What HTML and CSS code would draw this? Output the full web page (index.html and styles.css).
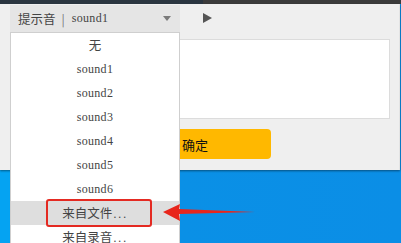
FILE: index.html
```html
<!DOCTYPE html>
<html lang="zh-CN">
<head>
	<meta charset="UTF-8">
	<title>提示音</title>
	<link rel="stylesheet" href="styles.css">
</head>
<body>
<div class="screen">
	<div class="topbar"><span class="topbar-left"></span></div>
	<div class="panel">
		<div class="toolbar">
			<div class="select-head">
				<span class="label">提示音</span>
				<span class="sep">|</span>
				<span class="value">sound1</span>
				<span class="caret"></span>
			</div>
			<span class="play"></span>
		</div>
		<div class="textbox"></div>
		<div class="actions">
			<button class="ok">确定</button>
		</div>
	</div>
	<!-- dropdown list opened over the panel -->
	<ul class="options">
		<li class="zh">无</li>
		<li>sound1</li>
		<li>sound2</li>
		<li>sound3</li>
		<li>sound4</li>
		<li>sound5</li>
		<li>sound6</li>
		<li class="zh hover">来自文件<span class="dots">...</span></li>
		<li class="zh">来自录音<span class="dots">...</span></li>
	</ul>
	<div class="mark"></div>
	<svg class="pointer" width="100" height="20" viewBox="0 0 100 20">
		<polygon points="0,9 17,1 16,6 92,9 16,11 17,18" fill="#e8261c"/>
	</svg>
</div>
</body>
</html>
```
FILE: styles.css
```css
* {
	margin: 0;
	padding: 0;
	box-sizing: border-box;
}
body {
	width: 401px;
	height: 243px;
	overflow: hidden;
	background: linear-gradient(90deg, #05a3f2 0, #05a3f2 10px, #0a90e6 180px, #0b8ee6 100%);
	font-family: "Noto Sans CJK SC", sans-serif;
}
.screen {
	position: relative;
	width: 401px;
	height: 243px;
}
.topbar {
	height: 4px;
	background: #3b3b3b;
	display: flex;
}
.topbar-left {
	width: 203px;
	background: #2a3540;
}
.panel {
	width: 400px;
	height: 166px;
	background: #efefef;
	border-right: 1px solid #e4e4e4;
	box-shadow: 0 1px 2px rgba(0, 0, 0, 0.45);
	display: flex;
	flex-direction: column;
}
.toolbar {
	display: flex;
	align-items: center;
	height: 28px;
	padding-left: 10px;
}
.select-head {
	width: 170px;
	height: 27px;
	margin-top: 1px;
	background: #e5e5e5;
	display: flex;
	align-items: center;
	padding-left: 8px;
	color: #444;
	font-size: 12.5px;
}
.sep {
	margin: 0 7px 0 6px;
	font-size: 12px;
	color: #777;
}
.value {
	font-family: "Liberation Serif", serif;
	font-size: 12px;
	letter-spacing: 0.3px;
	color: #444;
}
.caret {
	margin-left: auto;
	margin-right: 9px;
	border-left: 4px solid transparent;
	border-right: 4px solid transparent;
	border-top: 5px solid #7a7a7a;
}
.play {
	margin-left: 23px;
	border-top: 5.5px solid transparent;
	border-bottom: 5.5px solid transparent;
	border-left: 9px solid #555;
}
.textbox {
	margin: 7px 0 0 120px;
	width: 270px;
	height: 80px;
	background: #fff;
	border: 1px solid #dcdcdc;
}
.actions {
	margin: 10px 0 0 119px;
}
.ok {
	width: 152px;
	height: 30px;
	border: none;
	border-radius: 4px;
	background: #ffb800;
	color: #111;
	font-family: "Noto Sans CJK SC", sans-serif;
	font-size: 13px;
}
.options {
	position: absolute;
	left: 10px;
	top: 32px;
	width: 170px;
	height: 220px;
	background: #fff;
	border: 1px solid #cfcfcf;
	list-style: none;
}
.options li {
	height: 24px;
	line-height: 24px;
	text-align: center;
	font-family: "Liberation Serif", serif;
	font-size: 12px;
	letter-spacing: 0.3px;
	color: #444;
}
.options li.zh {
	font-family: "Noto Sans CJK SC", sans-serif;
	font-size: 12.5px;
	letter-spacing: 0;
}
.options li.hover {
	background: #dedede;
}
.dots {
	font-family: "Liberation Sans", sans-serif;
	font-size: 12px;
	letter-spacing: 1.5px;
	margin-left: 1px;
}
.mark {
	position: absolute;
	left: 46px;
	top: 199px;
	width: 106px;
	height: 28px;
	border: 2px solid #e42a22;
	border-radius: 3px;
}
.pointer {
	position: absolute;
	left: 163px;
	top: 203px;
}
```
